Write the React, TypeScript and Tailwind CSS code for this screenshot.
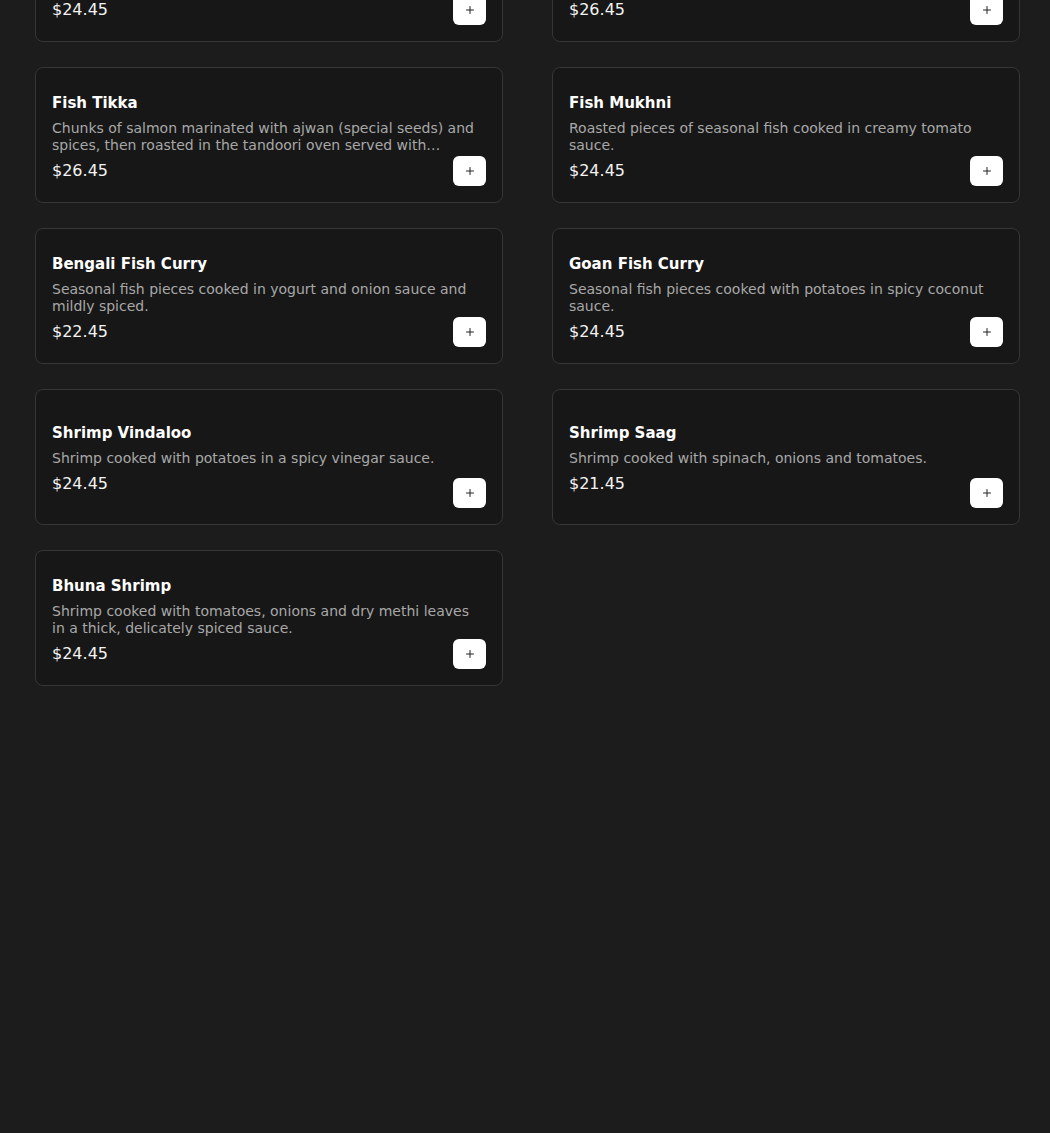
import { Plus } from "lucide-react";

type Dish = { name: string; description: string; price: string };

const dishes: Dish[] = [
  {
    name: "Fish Pakora",
    description: "Boneless fish fillets battered in chickpea flour with mild spices and deep fried until crisp.",
    price: "$24.45",
  },
  {
    name: "Salmon Tikka",
    description: "Salmon cubes marinated in yogurt, ginger, garlic and spices, roasted in the tandoor.",
    price: "$26.45",
  },
  {
    name: "Fish Tikka",
    description:
      "Chunks of salmon marinated with ajwan (special seeds) and spices, then roasted in the tandoori oven served with tamarind chutney.",
    price: "$26.45",
  },
  {
    name: "Fish Mukhni",
    description: "Roasted pieces of seasonal fish cooked in creamy tomato sauce.",
    price: "$24.45",
  },
  {
    name: "Bengali Fish Curry",
    description: "Seasonal fish pieces cooked in yogurt and onion sauce and mildly spiced.",
    price: "$22.45",
  },
  {
    name: "Goan Fish Curry",
    description: "Seasonal fish pieces cooked with potatoes in spicy coconut sauce.",
    price: "$24.45",
  },
  {
    name: "Shrimp Vindaloo",
    description: "Shrimp cooked with potatoes in a spicy vinegar sauce.",
    price: "$24.45",
  },
  {
    name: "Shrimp Saag",
    description: "Shrimp cooked with spinach, onions and tomatoes.",
    price: "$21.45",
  },
  {
    name: "Bhuna Shrimp",
    description: "Shrimp cooked with tomatoes, onions and dry methi leaves in a thick, delicately spiced sauce.",
    price: "$24.45",
  },
];

function DishCard({ dish }: { dish: Dish }) {
  return (
    <div className="relative h-[136px] rounded-lg border border-[#363636] bg-[#171717] px-4 pt-[3px] flex flex-col justify-center">
      <h3 className="text-[15px] leading-6 font-bold text-white">{dish.name}</h3>
      <p className="mt-[5px] text-sm leading-[17px] text-[#a8a8a8] line-clamp-2">{dish.description}</p>
      <div className="self-start mt-[5px] text-base leading-6 text-[#f2f2f2]">{dish.price}</div>
      <button className="absolute right-4 bottom-4 w-[33px] h-[30px] rounded-md bg-white flex items-center justify-center">
        <Plus className="w-3 h-3 text-[#222]" strokeWidth={2} />
      </button>
    </div>
  );
}

export default function App() {
  return (
    <div
      className="h-[1133px] overflow-hidden bg-[#1c1c1c]"
      style={{ fontFamily: '"DejaVu Sans", sans-serif' }}
    >
      <div className="-mt-[94px] pl-[35px] pr-[30px] grid grid-cols-2 gap-x-[49px] gap-y-[25px]">
        {dishes.map((dish, index) => (
          <DishCard key={index} dish={dish} />
        ))}
      </div>
    </div>
  );
}
